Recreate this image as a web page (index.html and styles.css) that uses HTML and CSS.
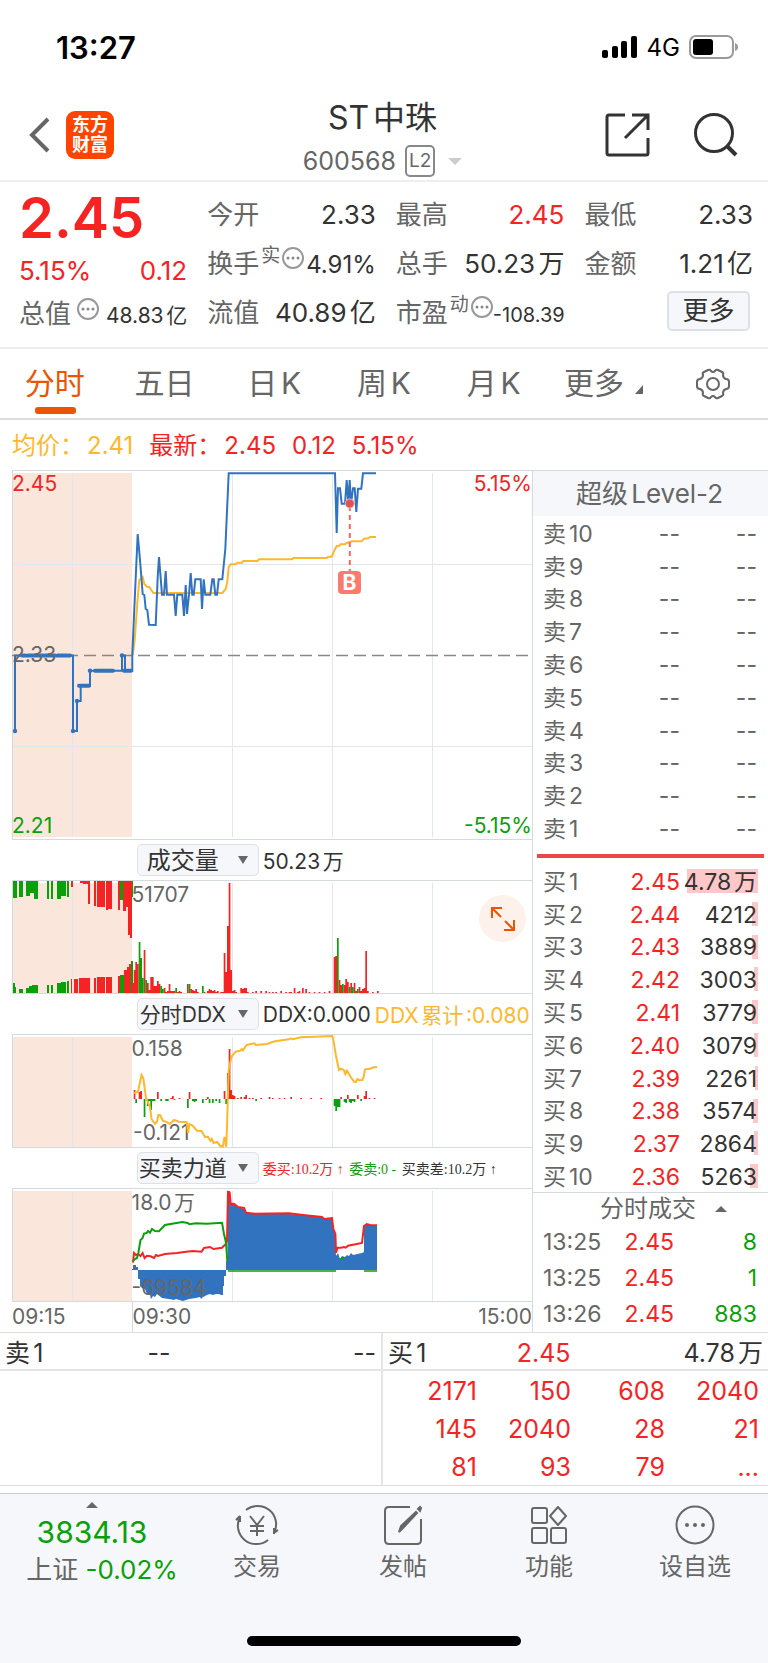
FILE: index.html
```html
<!DOCTYPE html>
<html lang="zh-CN">
<head>
    <meta charset="UTF-8">
    <meta name="viewport" content="width=device-width, initial-scale=1.0">
    <title>ST中珠 600568</title>
    <link rel="stylesheet" href="styles.css">
</head>
<body>
    <!-- 状态栏 -->
    <div class="status-bar">
        <span class="clock">13:27</span>
        <div class="status-icons">
            <svg width="36" height="24" viewBox="0 0 36 24">
                <rect x="0" y="15" width="6" height="8" rx="2"/>
                <rect x="10" y="11" width="6" height="12" rx="2"/>
                <rect x="19" y="6" width="6" height="17" rx="2"/>
                <rect x="29" y="1" width="6" height="22" rx="2"/>
            </svg>
            <span class="network">4G</span>
            <svg width="50" height="24" viewBox="0 0 50 24">
                <rect x="1" y="1" width="43" height="22" rx="6" fill="none" stroke="#9a9a9a" stroke-width="2"/>
                <rect x="4" y="4" width="20" height="16" rx="3"/>
                <path d="M46 8q3 1 3 4t-3 4z" fill="#9a9a9a"/>
            </svg>
        </div>
    </div>

    <header class="header">
        <button class="icon-btn" aria-label="返回">
            <svg width="22" height="36" viewBox="0 0 22 36"><path d="M20 2L4 18l16 16" fill="none" stroke="#666" stroke-width="4"/></svg>
        </button>
        <a class="logo" href="#">东方<br>财富</a>
        <div class="title">
            <h1>ST中珠</h1>
            <div class="code">
                <span>600568</span>
                <span class="level">L2</span>
                <span class="caret"></span>
            </div>
        </div>
        <button class="icon-btn share" aria-label="分享">
            <svg width="46" height="46" viewBox="0 0 46 46"><path d="M20 3H4q-2 0-2 2v36q0 2 2 2h37q2 0 2-2V26M27 3h16v15M43 3L20 26" fill="none" stroke="#333" stroke-width="3"/></svg>
        </button>
        <button class="icon-btn search" aria-label="搜索">
            <svg width="46" height="46" viewBox="0 0 46 46"><circle cx="21" cy="21" r="18.500" fill="none" stroke="#333" stroke-width="3"/><path d="M34 34l9 9" stroke="#333" stroke-width="4"/></svg>
        </button>
    </header>

    <!-- 行情摘要 -->
    <section class="quote">
        <div class="quote-main">
            <div class="price">2.45</div>
            <div class="change"><span>5.15%</span><span>0.12</span></div>
            <div class="cell">
                <span class="name">总值</span>
                <svg class="dots" width="22" height="22" viewBox="0 0 22 22"><use href="#more"/></svg>
                <span class="value small">48.83亿</span>
            </div>
        </div>
        <div class="quote-grid">
            <div class="cell"><span class="name">今开</span><span class="value">2.33</span></div>
            <div class="cell"><span class="name">最高</span><span class="value red">2.45</span></div>
            <div class="cell"><span class="name">最低</span><span class="value">2.33</span></div>
            <div class="cell">
                <span class="name">换手</span><span class="sup">实</span>
                <svg class="dots" width="22" height="22" viewBox="0 0 22 22"><use href="#more"/></svg>
                <span class="value mid">4.91%</span>
            </div>
            <div class="cell"><span class="name">总手</span><span class="value">50.23万</span></div>
            <div class="cell"><span class="name">金额</span><span class="value">1.21亿</span></div>
            <div class="cell"><span class="name">流值</span><span class="value">40.89亿</span></div>
            <div class="cell">
                <span class="name">市盈</span><span class="sup">动</span>
                <svg class="dots" width="22" height="22" viewBox="0 0 22 22"><use href="#more"/></svg>
                <span class="value small">-108.39</span>
            </div>
            <button class="more-btn">更多</button>
        </div>
    </section>

    <nav class="tabs">
        <a class="tab active" href="#">分时</a>
        <a class="tab" href="#">五日</a>
        <a class="tab" href="#">日K</a>
        <a class="tab" href="#">周K</a>
        <a class="tab" href="#">月K</a>
        <a class="tab tab-more" href="#">更多</a>
        <button class="icon-btn" aria-label="设置">
            <svg width="34" height="32" viewBox="0 0 34 32" fill="none" stroke="#666" stroke-width="2">
                <path d="M12 2q2-1 3 1 2 2 4 0 1-2 3-1l4 2q2 1 1 3 0 3 3 4 3 0 3 3v4q0 3-3 3-3 1-3 4 1 2-1 3l-4 2q-2 1-3-1-2-2-4 0-1 2-3 1l-4-2q-2-1-1-3 0-3-3-4-3 0-3-3v-4q0-3 3-3 3-1 3-4-1-2 1-3z"/>
                <circle cx="17" cy="16" r="6"/>
            </svg>
        </button>
    </nav>

    <div class="legend">
        <span class="yellow">均价：<b>2.41</b></span>
        <span class="red">最新：<b>2.45</b><b>0.12</b><b>5.15%</b></span>
    </div>

    <main class="main">
        <div class="charts">
            <!-- 分时走势 -->
            <div class="chart price-chart">
                <svg viewBox="0 0 520 370" preserveAspectRatio="none">
                    <rect class="auction" x="1" y="3" width="119" height="364"/>
                    <path class="grid" d="M60.500 3V367M220.500 3V367M320.500 3V367M420.500 3V367M0 94.500H520M0 276.500H520"/>
                    <path class="frame" d="M0 .5H520M.5 0V370M0 369.500H520"/>
                    <path d="M0 185.500H520" stroke="#888" stroke-width="1.500" stroke-dasharray="12 6"/>
                    <polyline class="avg" points="120.700,185 122.700,170 125.300,133 127.300,110 130.700,107 132.300,114 135,116.700 137.300,117 141.300,123 210.300,123 213.700,119 215.300,112 216.700,97 218.700,94.300 223.700,94.300 225.300,92.700 230,92.700 231.300,91 245.300,91 247,89.300 280.300,89.300 281.300,88 314.700,88 316.300,86.700 319.700,86.700 323,79 324.700,76 327.300,75.700 328.300,74.300 333,74.300 334.700,73 339.700,71.300 349.700,71.300 352,68.700 356.300,68.300 358,67 364,67"/>
                    <polyline class="last" points="3,261 3,185.500 61,185.500 61,261 65,261 65,231 68.700,231 68.700,215.700 78,215.700 78,200.700 110,200.700 110,185.500 113,185.500 113,200.700 120.300,200.700 120.300,185 122.700,130 125.700,64 128,90 130.700,124 132.300,125 133.700,139 135.300,140 137,154.700 143.700,155 145.700,107 147,87 150,124.700 152,124.700 153.700,101 155,124.700 162,124.700 163.700,146 165.300,124.700 170.300,124.700 172,146 173.700,115 175,144 177,124.700 178.700,103 180.300,124.700 181.700,124.700 183.300,109.300 188.700,109.300 190,139 191.700,109.300 193.300,124.700 198.300,124.700 200.300,109.300 201.700,109.300 203.300,124.700 205,124.700 206.700,109.300 210.300,109.300 213.300,79.300 216.700,3.300 323,3.300 324.700,63 326,18.300 328,18.300 329.700,33.700 333,33.700 334.700,10 336.300,33 337.700,10 339,33.700 341,18.300 342.700,18.300 344.300,42 346,18.700 349.300,18.700 351,3.300 364,3.300"/>
                    <path d="M10 185.500h3M16 185.500h15M33 185.500h10M46 185.500h9M57 185.500h1M67 215.700h10M83 200.700h2M86 200.700h15M112 200.700h7" stroke="#3273c0" stroke-width="4" stroke-linecap="round"/>
                    <g fill="#3273c0"><circle cx="3" cy="261" r="2.200"/><circle cx="61" cy="261" r="2.200"/><circle cx="65" cy="231" r="2.200"/><circle cx="78" cy="200.700" r="2.200"/><circle cx="110" cy="185.500" r="2.200"/></g>
                    <path d="M337.800 36V101" stroke="#f9685c" stroke-width="2" stroke-dasharray="5 4"/>
                    <circle cx="337.800" cy="33.500" r="4.500" fill="#e05353" stroke="#f2b5b5"/>
                </svg>
                <span class="lab top-left red">2.45</span>
                <span class="lab top-right red">5.15%</span>
                <span class="lab middle">2.33</span>
                <span class="lab bottom-left green">2.21</span>
                <span class="lab bottom-right green">-5.15%</span>
                <span class="buy-mark">B</span>
            </div>

            <div class="toolbar">
                <div class="picker"><select aria-label="指标一"><option>成交量</option></select></div>
                <span>50.23万</span>
            </div>
            <div class="chart">
                <svg viewBox="0 0 520 114" preserveAspectRatio="none">
                    <rect class="auction" x="1" y="3" width="119" height="110"/>
                    <path class="grid" d="M60.500 3V113M220.500 3V113M320.500 3V113M420.500 3V113"/>
                    <path class="up-fill" d="M59 0h2v7h-2zM64 0h3v1h-3zM68 0h3v3h-3zM71 0h5v4h-5zM76 0h2v24h-2zM82 0h2v26h-2zM85 0h8v27h-8zM94 0h2v30h-2zM96 0h4v29h-4zM106 0h2v30h-2zM111 0h3v31h-3zM114 0h2v27h-2zM116 0h2v55h-2zM118 0h2v58h-2z"/>
                    <path class="down-fill" d="M1 0h4v18h-4zM7 0h4v17h-4zM14 0h4v16h-4zM18 0h4v13h-4zM22 0h4v19h-4zM35 0h2v19h-2zM39 0h2v19h-2zM45 0h4v19h-4zM49 0h5v16h-5zM55 0h2v17h-2zM108 0h3v20h-3zM120 0h1v17h-1z"/>
                    <path class="up-fill" d="M59 99h1v14h-1zM62 99h4v14h-4zM67 98h11v15h-11zM82 98h2v15h-2zM85 97h8v16h-8zM94 97h6v16h-6zM106 96h2v17h-2zM112 90h3v23h-3zM115 87h2v26h-2zM117 84h2v29h-2z"/>
                    <path class="down-fill" d="M1 103h2v10h-2zM3 107h1v6h-1zM7 109h4v4h-4zM14 108h3v5h-3zM17 106h3v7h-3zM20 105h6v8h-6zM35 105h2v8h-2zM39 105h2v8h-2zM45 103h4v10h-4zM49 102h5v11h-5zM55 101h2v12h-2zM108 95h4v18h-4zM119 81h2v32h-2z"/>
                    <path class="up-fill" id="volUp"/>
                    <path class="down-fill" id="volDown"/>
                    <path class="frame" d="M0 .5H520M.5 0V114M0 113.500H520"/>
                </svg>
                <span class="lab axis-top">51707</span>
                <button class="expand" aria-label="全屏">
                    <svg width="24" height="24" viewBox="0 0 24 24" fill="none" stroke="#ea5504" stroke-width="2"><path d="M1 11V1h10M1 1l9 9M23 13v10H13M23 23l-9-9"/></svg>
                </button>
            </div>

            <div class="toolbar">
                <div class="picker"><select class="sm" aria-label="指标二"><option>分时DDX</option></select></div>
                <span>DDX:0.000</span>
                <span class="yellow">DDX累计:0.080</span>
            </div>
            <div class="chart">
                <svg viewBox="0 0 520 114" preserveAspectRatio="none">
                    <rect class="auction" x="1" y="3" width="119" height="110"/>
                    <path class="grid" d="M60.500 3V113M220.500 3V113M320.500 3V113M420.500 3V113"/>
                    <path class="frame" d="M0 .5H520M.5 0V114M0 113.500H520"/>
                    <text x="121" y="106" class="svg-label">-0.121</text>
                    <path class="up-fill" id="ddxUp"/>
                    <path class="down-fill" id="ddxDown"/>
                    <polyline class="avg" points="122,59 126,57.700 129.500,41 131.300,44 134,64 138,73 139.500,85 143,90 145,87.700 146.400,81 148,81 151,87 154,87.700 157.800,90 162,86 167,87.700 174.700,88.300 176,99 177.400,90 181,92 185,96.700 189.500,97 193,103 196,102.700 198.400,106.700 199.800,105 201.500,109 205,108 208.400,112 210.800,112.700 212.500,103 214.300,112.700 215.300,82.700 216.700,36 219.400,23 223.600,17.700 228.400,16.700 229.800,15 231,16.300 234.600,11 242,9.300 244,11 255,10 262.800,7.300 277,5.300 279,4.300 280.700,5.300 289,3.300 303,2.700 320.300,2 321.400,6 323.800,21 327,36 329,34.700 331.700,36 333.400,40 335,36.700 338.600,42.700 341.700,47.300 344,48 345.500,45 347.200,46.300 350.300,46 351.700,42.700 353,35.300 358,34.700 361.700,33.300 365,33"/>
                </svg>
                <span class="lab axis-top">0.158</span>
            </div>

            <div class="toolbar">
                <div class="picker"><select class="wide" aria-label="指标三"><option>买卖力道</option></select></div>
                <span class="force"><i class="red">委买:10.2万 ↑</i> <i class="green">委卖:0 -</i> <i>买卖差:10.2万 ↑</i></span>
            </div>
            <div class="chart">
                <svg viewBox="0 0 520 114" preserveAspectRatio="none">
                    <rect class="auction" x="1" y="3" width="119" height="110"/>
                    <path class="grid" d="M60.500 3V113M220.500 3V113M320.500 3V113M420.500 3V113"/>
                    <path d="M120 82V81h1V77h3v2h2v3H214V73h1.500V3H218V17L222 16 226 19 232 21 234 25 243 26 277 26 291 27 310 29 312 31 320 30 321 41 323 46 324 68 326 65 328 71 330 68 333 69 335 67 337 68 339 65 341 67 350 65 352 64V38L355 36 365 38V82H214V88H212V98H211V107H209L207 106H204L201 107 198 106 195 107 191 109 189 111 188 109 184 110 177 111 171 113 164 111 162 112 157 111 150 110 145 106 143 109 141 108 139 111 138 107 135 106 133 101 130 100 128 98V91H126V82z" fill="#3273c0"/>
                    <polyline class="force-line" stroke="#f62323" points="121,74.700 122,65 124,67 126,66 128.500,68 130.600,65 132.600,70 135,67.700 138.500,68.300 142,70 144,67 146,68 153,66 165,65 174,63.700 181,63 189.500,63.700 192,60 198,59 201.500,61 210,59.700 214,55.700 215,53 216,4 217.700,4.700 218.700,16 222,15.700 226,19 232,20 234,24.700 243,25.700 277,25.300 291,27 310,29 312,31 320,30 321.400,41 323.400,46 324,64.700 325.500,59.700 329,59.700 332,59 333.800,59.700 336,57.700 350,55 352,38 354.800,36 358,37 365,37.300"/>
                    <polyline class="force-line" stroke="#0aa00a" points="121,73 123,71 125,70 126.400,64.700 128.500,52 130.600,50 132,45.700 134.700,45 136,43 138,44.700 140,41 143,43 147,43.300 153,37 160,35.700 170.500,34 175.700,35 177.400,36.300 184,35.300 194.600,35.700 210,34.700 212,46 214,54.700 215.300,73"/>
                    <path d="M216 83H324M328 71l4-1M352 83H365" stroke="#0aa00a" stroke-width="1.500"/>
                    <path class="frame" d="M0 .5H520M.5 0V114M0 113.500H520"/>
                </svg>
                <span class="lab axis-top">18.0万</span>
                <span class="lab axis-bottom">-69584</span>
            </div>

            <div class="time-axis"><span>09:15</span><span>09:30</span><span>15:00</span></div>
        </div>

        <!-- 盘口 -->
        <aside class="book">
            <h2>超级Level-2</h2>
            <table class="levels" id="sells"></table>
            <div class="split"></div>
            <table class="levels" id="buys"></table>
            <h3>分时成交 <span class="up-caret"></span></h3>
            <table class="deals">
                <tr><td>13:25</td><td class="red">2.45</td><td class="green">8</td></tr>
                <tr><td>13:25</td><td class="red">2.45</td><td class="green">1</td></tr>
                <tr><td>13:26</td><td class="red">2.45</td><td class="green">883</td></tr>
            </table>
        </aside>
    </main>

    <section class="queue">
        <div class="side">
            <div class="side-head"><span>卖1</span><span class="dash">--</span><span>--</span></div>
        </div>
        <div class="side buy-side">
            <div class="side-head"><span>买1</span><span class="red">2.45</span><span>4.78万</span></div>
            <div class="orders">
                <span>2171</span><span>150</span><span>608</span><span>2040</span>
                <span>145</span><span>2040</span><span>28</span><span>21</span>
                <span>81</span><span>93</span><span>79</span><span>...</span>
            </div>
        </div>
    </section>

    <footer class="bottom">
        <nav class="bottom-nav">
            <a class="index" href="#">
                <span class="up-caret"></span>
                <span class="index-value">3834.13</span>
                <span class="index-name">上证 <em>-0.02%</em></span>
            </a>
            <a class="item" href="#">
                <svg width="46" height="42" viewBox="0 0 46 42" fill="none" stroke="#666" stroke-width="2">
                    <path d="M12 6A18.500 18.500 0 0 1 40 29M40 29l4-3M40 30V24M34 36A18.500 18.500 0 0 1 6 13M6 12v6M6 12l-4 4M16 12l7 9 7-9M23 21v11M16 22h14M16 27h14"/>
                </svg>
                交易
            </a>
            <a class="item" href="#">
                <svg width="46" height="42" viewBox="0 0 46 42" fill="none" stroke="#666" stroke-width="2">
                    <path d="M30 3H9Q5 3 5 7V36q0 4 4 4H37q4 0 4-4V15"/>
                    <path d="M19 28l2-6L36 8l1 1-14 15zM38 5l2-2 1 1-1 3z" fill="#666"/>
                </svg>
                发帖
            </a>
            <a class="item" href="#">
                <svg width="46" height="42" viewBox="0 0 46 42" fill="none" stroke="#666" stroke-width="2">
                    <rect x="6" y="4" width="15" height="15" rx="2"/>
                    <path d="M32 3l8 9-8 9-8-9z" stroke-linejoin="round"/>
                    <rect x="6" y="24" width="15" height="15" rx="2"/>
                    <rect x="25" y="24" width="15" height="15" rx="2"/>
                </svg>
                功能
            </a>
            <a class="item" href="#">
                <svg width="46" height="42" viewBox="0 0 46 42">
                    <circle cx="23" cy="21" r="18.500" fill="none" stroke="#666" stroke-width="2"/>
                    <g fill="#666"><circle cx="15" cy="21" r="2"/><circle cx="23" cy="21" r="2"/><circle cx="31" cy="21" r="2"/></g>
                </svg>
                设自选
            </a>
        </nav>
        <div class="home-bar"></div>
    </footer>

    <svg class="defs" width="0" height="0" aria-hidden="true">
        <symbol id="more" viewBox="0 0 22 22">
            <circle cx="11" cy="11" r="10" fill="none" stroke="#999" stroke-width="2"/>
            <g fill="#888"><circle cx="6" cy="11" r="1.500"/><circle cx="11" cy="11" r="1.500"/><circle cx="16" cy="11" r="1.500"/></g>
        </symbol>
    </svg>

    <script src="app.js"></script>
</body>
</html>
```

FILE: styles.css
```css
* {
    margin: 0;
    padding: 0;
    box-sizing: border-box;
}
body {
    background: #fff;
    color: #333;
    font-family: Inter, "Noto Sans CJK SC", sans-serif;
    font-size: 24px;
    text-autospace: normal;
}
a {
    color: inherit;
    text-decoration: none;
}
button, select {
    font-family: inherit;
    color: inherit;
    background: none;
    border: none;
}
h1, h2, h3, b {
    font-weight: 400;
}
i, em {
    font-style: normal;
}
table {
    width: 100%;
    border-collapse: collapse;
    table-layout: fixed;
}
.red { color: #f62323; }
.green { color: #0aa00a; }
.yellow { color: #ffb72c; }
.defs { position: absolute; }

/* 状态栏 */
.status-bar {
    display: flex;
    justify-content: space-between;
    align-items: center;
    height: 90px;
    padding: 4px 29px 0 56px;
    color: #000;
}
.clock {
    font-size: 31px;
    font-weight: 600;
}
.status-icons {
    display: flex;
    align-items: center;
    gap: 9px;
}

/* 标题 */
.header {
    display: flex;
    align-items: center;
    height: 92px;
    padding: 0 29px 0 28px;
    border-bottom: 2px solid #eee;
}
.icon-btn {
    display: flex;
    align-items: center;
    justify-content: center;
    cursor: pointer;
}
.logo {
    width: 48px;
    height: 48px;
    margin-left: 16px;
    padding-top: 4px;
    border-radius: 9px;
    background: #ff4400;
    color: #fff;
    font-size: 18px;
    font-weight: 700;
    line-height: 20px;
    text-align: center;
}
.title {
    flex: 1;
    padding: 8px 0 0 46px;
    text-align: center;
}
.title h1 {
    font-size: 32px;
    line-height: 44px;
}
.code {
    display: flex;
    align-items: center;
    justify-content: center;
    gap: 9px;
    height: 42px;
    color: #666;
    font-size: 25px;
}
.level {
    padding: 0 2px;
    border: 2px solid #888;
    border-radius: 5px;
    font-size: 19px;
    line-height: 28px;
}
.caret {
    margin-left: 4px;
    border: 7px solid transparent;
    border-top-color: #ccc;
    border-bottom: none;
}
.share { margin-right: 42px; }

/* 行情摘要 */
.quote {
    display: grid;
    grid-template-columns: 168fr 545fr;
    column-gap: 20px;
    padding: 8px 15px 10px 19px;
    border-bottom: 2px solid #eee;
}
.price {
    color: #f62323;
    font-size: 56px;
    font-weight: 600;
    line-height: 56px;
}
.change {
    display: flex;
    justify-content: space-between;
    color: #f62323;
    font-size: 26px;
    line-height: 50px;
}
.quote-grid {
    display: grid;
    grid-template-columns: repeat(3, 1fr);
    grid-auto-rows: 49px;
    column-gap: 20px;
}
.cell {
    display: flex;
    align-items: baseline;
    min-width: 0;
    line-height: 49px;
    white-space: nowrap;
}
.quote-main .cell { line-height: 36px; }
.name {
    color: #666;
    font-size: 26px;
}
.value {
    margin-left: auto;
    font-size: 26px;
}
.value.mid { font-size: 24px; }
.value.small { font-size: 20px; }
.quote-main .value.small { font-size: 21px; }
.sup {
    align-self: flex-start;
    margin-left: 2px;
    color: #666;
    font-size: 19px;
    line-height: 34px;
}
.dots {
    flex: none;
    align-self: flex-start;
    margin: 8px 0 0 2px;
}
.quote-main .dots {
    margin: 2px 0 0 6px;
}
.more-btn {
    justify-self: end;
    align-self: center;
    width: 83px;
    height: 40px;
    margin: -4px 3px 0 0;
    border: 2px solid #dde0e6;
    border-radius: 5px;
    background: #f6f7fa;
    font-size: 26px;
    line-height: 36px;
}

/* 周期切换 */
.tabs {
    display: grid;
    grid-template-columns: repeat(7, 1fr);
    height: 71px;
    border-bottom: 2px solid #ddd;
    color: #666;
    font-size: 30px;
    line-height: 69px;
    text-align: center;
}
.tab { position: relative; }
.tab.active { color: #ea5504; }
.tab.active::after {
    content: "";
    position: absolute;
    left: calc(50% - 20px);
    bottom: 4px;
    width: 41px;
    height: 7px;
    border-radius: 3px;
    background: #ea5504;
}
.tab-more::after {
    content: "";
    display: inline-block;
    margin-left: 11px;
    border-left: 8px solid transparent;
    border-bottom: 9px solid #666;
}

.legend {
    display: flex;
    gap: 16px;
    padding-left: 12px;
    line-height: 52px;
    height: 50px;
}
.legend b { margin-left: 3px; }
.legend b + b { margin-left: 16px; }

/* 图表 */
.main {
    display: grid;
    grid-template-columns: 1fr 236px;
}
.charts {
    min-width: 0;
    padding-left: 12px;
}
.chart {
    position: relative;
    height: 114px;
}
.price-chart { height: 370px; }
.chart > svg {
    display: block;
    width: 100%;
    height: 100%;
}
.auction { fill: #fae6da; }
.grid { stroke: #e3e6ee; }
.frame { stroke: #d5dade; }
.avg, .last, .force-line {
    fill: none;
    stroke-width: 2;
}
.avg { stroke: #ffb72c; }
.last { stroke: #3273c0; }
.up-fill { fill: #f62323; }
.down-fill { fill: #0aa00a; }
.svg-label {
    fill: #666;
    font-size: 21px;
}
.lab {
    position: absolute;
    left: 0;
    color: #666;
    font-size: 21px;
    line-height: 24px;
}
.lab.red { color: #f62323; }
.lab.green { color: #0aa00a; }
.top-left, .top-right { top: 2px; }
.top-right, .bottom-right {
    left: auto;
    right: 0;
}
.middle { top: 173px; }
.bottom-left, .bottom-right { bottom: 2px; }
.axis-top {
    top: 3px;
    left: 23%;
}
.axis-bottom {
    bottom: 2px;
    left: 23%;
}
.buy-mark {
    position: absolute;
    top: 101px;
    left: calc(65% - 12px);
    width: 23px;
    height: 23px;
    border-radius: 4px;
    background: #ff7a6b;
    color: #fff;
    font-size: 21px;
    font-weight: 700;
    line-height: 23px;
    text-align: center;
}
.expand {
    position: absolute;
    top: 15px;
    right: 6px;
    width: 47px;
    height: 47px;
    padding-top: 4px;
    border-radius: 50%;
    background: #fdf1eb;
}
.toolbar {
    display: flex;
    align-items: center;
    gap: 4px;
    height: 40px;
    padding-left: 24%;
    font-size: 21px;
    white-space: nowrap;
}
.picker {
    position: relative;
    flex: none;
    width: 122px;
}
.picker::after {
    content: "";
    position: absolute;
    top: 12px;
    right: 11px;
    border: 5px solid transparent;
    border-top: 8px solid #666;
    border-bottom: none;
    pointer-events: none;
}
.picker select {
    appearance: none;
    display: block;
    width: 100%;
    height: 32px;
    padding-right: 30px;
    border: 1px solid #dde0e6;
    border-radius: 5px;
    background: #f6f7fa;
    font-size: 24px;
    text-align-last: center;
}
.picker select.sm { font-size: 21px; }
.picker select.wide { font-size: 22px; }
.force {
    font-family: "Liberation Serif", "Noto Sans CJK SC", serif;
    font-size: 14px;
    text-autospace: no-autospace;
}
.force i + i { margin-left: 2px; }
.time-axis {
    display: grid;
    grid-template-columns: 23% 1fr auto;
    color: #666;
    font-size: 21px;
    line-height: 30px;
}
.time-axis span:nth-child(2) { border-left: 1px solid #d5dade; }

/* 盘口 */
.book {
    border-left: 1px solid #d5dade;
    color: #666;
}
.book h2 {
    height: 46px;
    padding-right: 2px;
    border-top: 1px solid #d5dade;
    background: #f6f7fa;
    font-size: 26px;
    line-height: 46px;
    text-align: center;
}
.levels {
    height: 328px;
    font-size: 23px;
    line-height: 26px;
}
.levels td { padding-top: 3px; }
.levels td, .deals td {
    text-align: right;
    white-space: nowrap;
}
.levels td:first-child, .deals td:first-child {
    width: 68px;
    padding-left: 10px;
    text-align: left;
}
.levels td:last-child {
    position: relative;
    width: 88px;
    padding-right: 11px;
    color: #333;
}
#sells td { color: #666; }
.amount { position: relative; }
.depth {
    position: absolute;
    top: 5px;
    right: 10px;
    height: 24px;
    background: #ffc8c8;
}
.split {
    height: 4px;
    margin: 10px 4px 6px;
    background: #ea4848;
}
.book h3 {
    display: flex;
    align-items: center;
    justify-content: center;
    gap: 19px;
    height: 32px;
    padding-left: 26px;
    border-top: 1px solid #d5dade;
    font-size: 24px;
    line-height: 30px;
}
.up-caret {
    border: 6px solid transparent;
    border-top: none;
    border-bottom-color: #666;
}
.deals {
    font-size: 23px;
    line-height: 36px;
}
.deals td:first-child { width: 76px; }
.deals td:last-child {
    width: 94px;
    padding-right: 11px;
}

/* 买卖队列 */
.queue {
    display: grid;
    grid-template-columns: 381fr 387fr;
    margin-bottom: 7px;
    border-top: 1px solid #ddd;
    border-bottom: 1px solid #ddd;
    font-size: 25px;
}
.side-head {
    display: grid;
    grid-template-columns: 1fr 1fr 2fr;
    padding: 4px 5px 0;
    border-bottom: 2px solid #e3e5e9;
    line-height: 32px;
    text-align: right;
}
.side-head span:first-child { text-align: left; }
.side-head .dash { padding-right: 20px; }
.buy-side { border-left: 2px solid #e3e5e9; }
.buy-side .red { padding-right: 5px; }
.orders {
    display: grid;
    grid-template-columns: repeat(4, 1fr);
    row-gap: 2px;
    padding: 2px 9px 0 0;
    color: #f62323;
    line-height: 36px;
    text-align: right;
}

/* 底部导航 */
.bottom {
    padding-bottom: 17px;
    border-top: 1px solid #ccd0d5;
    background: #f6f7fa;
    color: #666;
}
.bottom-nav {
    display: grid;
    grid-template-columns: 184fr repeat(4, 146fr);
    height: 142px;
    padding-top: 8px;
}
.index, .item {
    display: flex;
    flex-direction: column;
    align-items: center;
    white-space: nowrap;
}
.item {
    padding-top: 2px;
    line-height: 42px;
}
.index-value {
    color: #0aa00a;
    font-size: 30px;
    line-height: 48px;
}
.index-name {
    padding-left: 20px;
    font-size: 26px;
    line-height: 28px;
}
.index em {
    color: #0aa00a;
    font-size: 26px;
}
.home-bar {
    width: 274px;
    height: 10px;
    margin: 0 auto;
    border-radius: 5px;
    background: #000;
}
```

FILE: app.js
```js
// 十档买盘：价格、数量、色条宽度
const buys = [
    ["2.45", "4.78万", 71], ["2.44", "4212", 6], ["2.43", "3889", 6], ["2.42", "3003", 4], ["2.41", "3779", 6],
    ["2.40", "3079", 4], ["2.39", "2261", 3], ["2.38", "3574", 5], ["2.37", "2864", 4], ["2.36", "5263", 8]
];

const sellRows = [];
for (let n = 10; n >= 1; n--) {
    sellRows.push(`<tr><td>卖${n}</td><td>--</td><td>--</td></tr>`);
}
document.getElementById("sells").innerHTML = sellRows.join("");

document.getElementById("buys").innerHTML = buys.map(([price, amount, depth], i) => `
    <tr><td>买${i + 1}</td><td class="red">${price}</td><td><span class="depth" style="width: ${depth}px"></span><span class="amount">${amount}</span></td></tr>
`).join("");

// 每分钟一根柱，[分钟, 高度]
const START = 120;
const STEP = 5 / 3;

function drawBars(id, base, bars) {
    const d = bars.map(([minute, h]) =>
        `M${(START + minute * STEP).toFixed(1)} ${base}v${-h}h1.7v${h}z`
    ).join("");
    document.getElementById(id).setAttribute("d", d);
}

drawBars("volUp", 113, [
    [0, 10], [1, 23], [2, 31], [3, 29], [7, 43], [9, 10], [10, 3], [11, 16], [12, 16], [13, 7], [14, 7], [15, 12], [16, 9],
    [19, 5], [20, 1], [21, 2], [22, 9], [23, 2], [24, 2], [25, 2], [27, 1], [28, 2], [29, 1], [33, 9], [35, 4], [36, 3],
    [37, 2], [38, 4], [39, 1], [43, 1], [45, 2], [46, 4], [47, 3], [48, 2], [49, 3], [50, 1], [51, 2], [53, 1], [54, 1],
    [55, 40], [56, 21], [57, 67], [58, 110], [59, 23], [60, 2], [61, 3], [62, 1], [65, 5], [66, 4], [67, 5], [68, 5],
    [69, 1], [72, 1], [74, 2], [77, 2], [80, 2], [82, 1], [84, 1], [86, 1], [89, 2], [92, 1], [94, 1], [95, 1], [97, 5],
    [99, 1], [100, 2], [102, 5], [104, 4], [106, 1], [109, 1], [112, 1], [115, 1], [118, 2],
    [121, 36], [122, 37], [124, 13], [125, 8], [127, 8], [128, 14], [129, 11], [131, 10], [133, 10], [134, 2],
    [136, 6], [137, 2], [138, 4], [139, 5], [140, 42], [141, 2], [144, 1], [147, 2]
]);
drawBars("volDown", 113, [
    [4, 51], [5, 35], [6, 15], [8, 13], [17, 7], [18, 4], [26, 5], [34, 9], [42, 7],
    [123, 55], [126, 9], [130, 6], [132, 6], [135, 4]
]);
drawBars("ddxUp", 65, [
    [1, 9], [4, 7], [5, 8], [15, 7], [23, 1], [24, 3], [28, 1], [34, 7], [45, 2], [55, 8], [57, 26], [58, 50], [59, 9],
    [60, 4], [61, 3], [63, 1], [65, 2], [67, 2], [68, 4], [70, 1], [72, 1], [77, 1], [82, 2], [84, 1], [88, 1], [91, 1],
    [95, 2], [101, 1], [107, 1], [113, 1], [125, 2], [129, 4], [135, 4], [139, 3], [140, 8], [142, 1], [145, 1]
]);
drawBars("ddxDown", 65, [
    [2, -4], [7, -18], [9, -7], [10, -2], [11, -11], [12, -2], [13, -2], [17, -2], [20, -2], [21, -2], [25, -1], [33, -9],
    [36, -2], [37, -3], [38, -2], [42, -4], [44, -1], [46, -4], [48, -4], [50, -2], [52, -4], [56, -5], [74, -2],
    [121, -7], [122, -12], [123, -8], [124, -8], [127, -3], [128, -4], [130, -3], [131, -4], [132, -2], [133, -3], [137, -2]
]);
```
